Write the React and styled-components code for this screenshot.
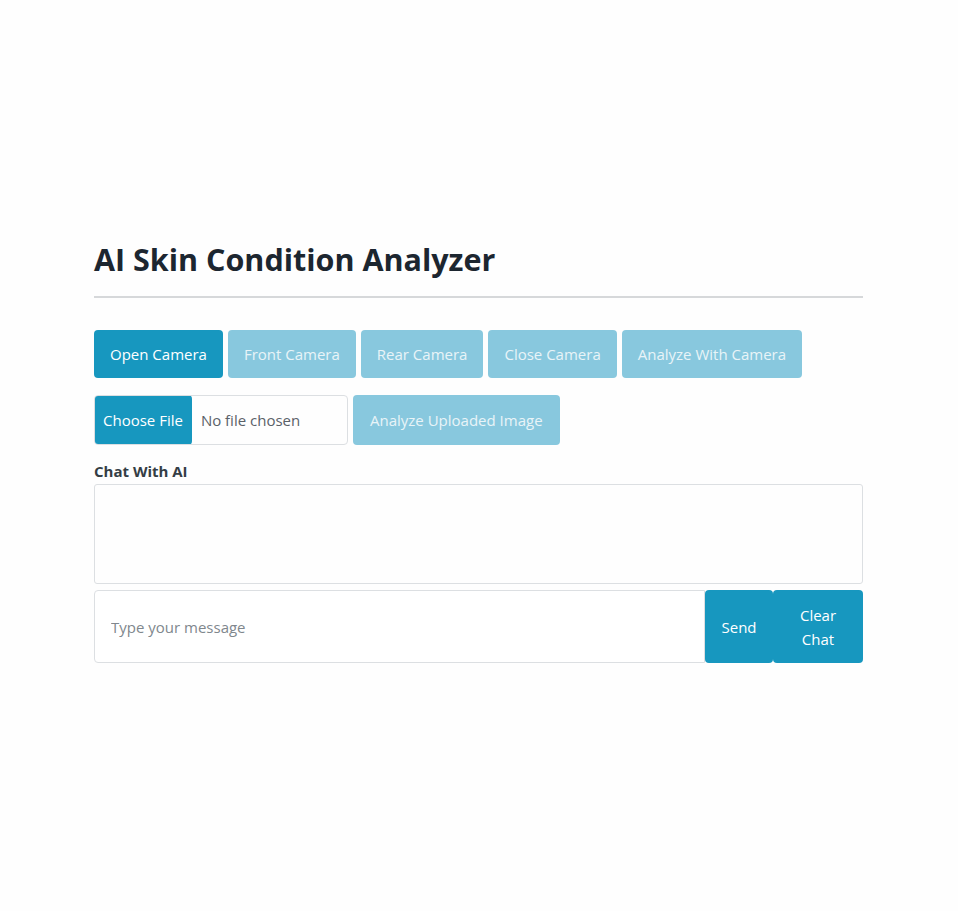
import React from "react";
import styled, { createGlobalStyle } from "styled-components";

const Global = createGlobalStyle`
  html, body { margin: 0; padding: 0; background: #fefefe; }
  body { font-family: "Open Sans", "Liberation Sans", sans-serif; color: #212b33; }
  * { box-sizing: border-box; }
`;

const Page = styled.div`
  width: 958px;
  min-height: 911px;
  padding: 236px 95px 0 94px;
`;

const Title = styled.h1`
  margin: 0;
  font-size: 30.5px;
  font-weight: 700;
  line-height: 46px;
  color: #1c2630;
`;

const Rule = styled.hr`
  margin: 14px 0 32px;
  border: 0;
  border-top: 2px solid #d6d8da;
`;

const Row = styled.div`
  display: flex;
  gap: 5px;
  margin-bottom: ${p => p.$mb || 0}px;
`;

const Btn = styled.button`
  height: ${p => p.$h || 48}px;
  padding: 0 ${p => p.$px || 16}px;
  border: 0;
  border-radius: 4px;
  font-family: inherit;
  font-size: 15px;
  color: ${p => (p.$light ? "#e8f4f8" : "#ffffff")};
  background: ${p => (p.$light ? "#88c8de" : "#1797bf")};
  cursor: pointer;
  white-space: nowrap;
`;

const FileBox = styled.div`
  display: flex;
  align-items: stretch;
  width: 254px;
  height: 50px;
  border: 1px solid #dcdfe2;
  border-radius: 4px;
  overflow: hidden;
`;

const FileBtn = styled.span`
  display: flex;
  align-items: center;
  padding: 0 9px;
  background: #1797bf;
  color: #fff;
  font-size: 15px;
  border-radius: 4px;
  margin: -1px 0 -1px -1px;
`;

const FileText = styled.span`
  display: flex;
  align-items: center;
  padding-left: 9px;
  font-size: 15px;
  color: #5a6168;
`;

const Label = styled.div`
  margin: 16px 0 3px;
  font-size: 15px;
  font-weight: 700;
  color: #343d45;
`;

const ChatBox = styled.div`
  height: 100px;
  border: 1px solid #dcdfe2;
  border-radius: 3px;
`;

const InputRow = styled.div`
  display: flex;
  margin-top: 6px;
  height: 73px;
`;

const MsgInput = styled.input`
  flex: 1;
  border: 1px solid #dcdfe2;
  border-radius: 4px 0 0 4px;
  padding: 0 16px;
  font-family: inherit;
  font-size: 15px;
  color: #333;
  outline: none;
  &::placeholder { color: #80878d; }
`;

const SideBtn = styled.button`
  width: ${p => p.$w}px;
  border: 0;
  border-radius: 4px;
  background: #1797bf;
  color: #fff;
  font-family: inherit;
  font-size: 15px;
  line-height: 24px;
  padding: 0 12px;
`;

export default function App() {
  return (
    <>
      <Global />
      <Page>
        <Title>AI Skin Condition Analyzer</Title>
        <Rule />
        <Row $mb={17}>
          <Btn>Open Camera</Btn>
          <Btn $light>Front Camera</Btn>
          <Btn $light>Rear Camera</Btn>
          <Btn $light>Close Camera</Btn>
          <Btn $light>Analyze With Camera</Btn>
        </Row>
        <Row>
          <FileBox>
            <FileBtn>Choose File</FileBtn>
            <FileText>No file chosen</FileText>
          </FileBox>
          <Btn $light $h={50} $px={17}>Analyze Uploaded Image</Btn>
        </Row>
        <Label>Chat With AI</Label>
        <ChatBox />
        <InputRow>
          <MsgInput placeholder="Type your message" />
          <SideBtn $w={68}>Send</SideBtn>
          <SideBtn $w={90}>Clear Chat</SideBtn>
        </InputRow>
      </Page>
    </>
  );
}
